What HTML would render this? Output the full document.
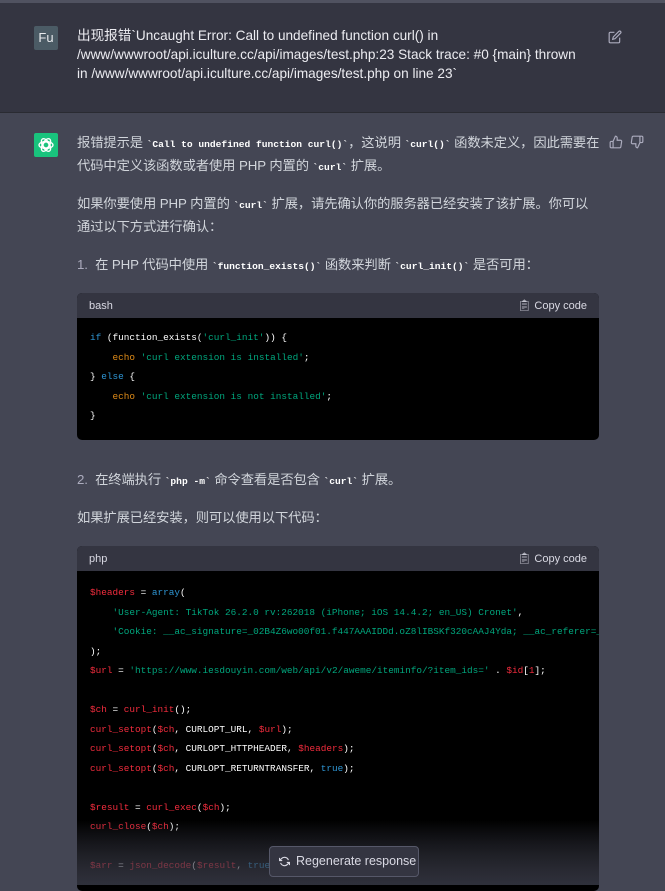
<!DOCTYPE html>
<html><head><meta charset="utf-8"><style>
*{margin:0;padding:0;box-sizing:border-box}
body{width:665px;height:885px;overflow:hidden;background:#444654;font-family:"Liberation Sans","Noto Sans CJK SC",sans-serif;color:#d1d5db;font-size:13px;position:relative}
.user{position:absolute;left:0;top:0;width:665px;height:113px;background:#343541;border-top:3px solid #505260;border-bottom:1px solid #2a2b32}
.av{position:absolute;left:34px;width:24px;height:24px;border-radius:2px}
.t{position:absolute;left:77px;width:505px}
.ut{line-height:19px;color:#ececf1;font-size:13.6px}
p{position:absolute;left:77px;width:530px;line-height:22.5px;font-size:13.3px;letter-spacing:-0.1px}
p span,p code{line-height:1}
code.i{font-family:"Liberation Mono",monospace;font-weight:bold;font-size:9.6px;color:#fff;letter-spacing:0}
.cb{position:absolute;left:77px;width:522px;border-radius:5px;overflow:hidden;background:#000}
.hd{height:25px;background:#343541;font-size:11px;color:#d9d9e3;display:flex;align-items:center;justify-content:space-between;padding:0 12px}
pre{font-family:"Liberation Mono",monospace;font-size:9.4px;line-height:19.5px;padding:11px 13px;color:#fff;white-space:pre;overflow:hidden}
.k{color:#2e95d3}.s{color:#00a67d}.e{color:#f22c3d}.o{color:#df8b18}
</style></head><body>
<div class="user">
<div class="av" style="top:23px;background:#4b5b65;color:#e8eaed;font-size:13px;text-align:center;line-height:24px">Fu</div>
<div class="t ut" style="top:23px">出现报错`Uncaught Error: Call to undefined function curl() in /www/wwwroot/api.iculture.cc/api/images/test.php:23 Stack trace: #0 {main} thrown in /www/wwwroot/api.iculture.cc/api/images/test.php on line 23`</div>
<svg style="position:absolute;left:608px;top:27px" width="14" height="14" viewBox="0 0 24 24" fill="none" stroke="#acacbe" stroke-width="2"><path d="M11 4H4a2 2 0 0 0-2 2v14a2 2 0 0 0 2 2h14a2 2 0 0 0 2-2v-7"/><path d="M18.5 2.5a2.1 2.1 0 0 1 3 3L12 15l-4 1 1-4 9.5-9.5z"/></svg>
</div>
<div class="av" style="top:133px;background:#19c37d;"><svg width="24" height="24" viewBox="0 0 24 24" fill="none" stroke="#fff" stroke-width="1.3"><circle cx="12" cy="12" r="3"/><ellipse cx="12" cy="12" rx="7" ry="3.5"/><ellipse cx="12" cy="12" rx="7" ry="3.5" transform="rotate(60 12 12)"/><ellipse cx="12" cy="12" rx="7" ry="3.5" transform="rotate(120 12 12)"/></svg></div>
<svg style="position:absolute;left:609px;top:135px" width="14" height="14" viewBox="0 0 24 24" fill="none" stroke="#acacbe" stroke-width="2"><path d="M14 9V5a3 3 0 0 0-3-3l-4 9v11h11.3a2 2 0 0 0 2-1.7l1.4-9a2 2 0 0 0-2-2.3zM7 22H4a2 2 0 0 1-2-2v-7a2 2 0 0 1 2-2h3"/></svg>
<svg style="position:absolute;left:630px;top:135px" width="14" height="14" viewBox="0 0 24 24" fill="none" stroke="#acacbe" stroke-width="2"><path d="M10 15v4a3 3 0 0 0 3 3l4-9V2H5.7a2 2 0 0 0-2 1.7l-1.4 9a2 2 0 0 0 2 2.3zM17 2h3a2 2 0 0 1 2 2v7a2 2 0 0 1-2 2h-3"/></svg>
<p style="top:132px">报错提示是 <code class="i">`Call to undefined function curl()`</code>，这说明 <code class="i">`curl()`</code> 函数未定义，因此需要在代码中定义该函数或者使用 PHP 内置的 <code class="i">`curl`</code> 扩展。</p>
<p style="top:193px;width:522px">如果你要使用 PHP 内置的 <code class="i">`curl`</code> 扩展，请先确认你的服务器已经安装了该扩展。你可以通过以下方式进行确认：</p>
<p style="top:254px"><span style="color:#acacbe">1.</span>&nbsp; 在 PHP 代码中使用 <code class="i">`function_exists()`</code> 函数来判断 <code class="i">`curl_init()`</code> 是否可用：</p>
<div class="cb" style="top:293px;height:147px">
<div class="hd"><span>bash</span><span>&#128203;&#xFE0E; Copy code</span></div>
<pre style="padding-top:10px"><span class="k">if</span> (function_exists(<span class="s">'curl_init'</span>)) {
    <span class="o">echo</span> <span class="s">'curl extension is installed'</span>;
} <span class="k">else</span> {
    <span class="o">echo</span> <span class="s">'curl extension is not installed'</span>;
}</pre></div>
<p style="top:469px"><span style="color:#acacbe">2.</span>&nbsp; 在终端执行 <code class="i">`php -m`</code> 命令查看是否包含 <code class="i">`curl`</code> 扩展。</p>
<p style="top:507px">如果扩展已经安装，则可以使用以下代码：</p>
<div class="cb" style="top:546px;height:345px">
<div class="hd"><span>php</span><span>&#128203;&#xFE0E; Copy code</span></div>
<pre style="padding-top:12px"><span class="e">$headers</span> = <span class="k">array</span>(
    <span class="s">'User-Agent: TikTok 26.2.0 rv:262018 (iPhone; iOS 14.4.2; en_US) Cronet'</span>,
    <span class="s">'Cookie: __ac_signature=_02B4Z6wo00f01.f447AAAIDDd.oZ8lIBSKf320cAAJ4Yda; __ac_referer=__ac_blank'</span>
);
<span class="e">$url</span> = <span class="s">'https://www.iesdouyin.com/web/api/v2/aweme/iteminfo/?item_ids='</span> . <span class="e">$id</span>[<span class="e">1</span>];

<span class="e">$ch</span> = <span class="e">curl_init</span>();
<span class="e">curl_setopt</span>(<span class="e">$ch</span>, CURLOPT_URL, <span class="e">$url</span>);
<span class="e">curl_setopt</span>(<span class="e">$ch</span>, CURLOPT_HTTPHEADER, <span class="e">$headers</span>);
<span class="e">curl_setopt</span>(<span class="e">$ch</span>, CURLOPT_RETURNTRANSFER, <span class="k">true</span>);

<span class="e">$result</span> = <span class="e">curl_exec</span>(<span class="e">$ch</span>);
<span class="e">curl_close</span>(<span class="e">$ch</span>);

<span class="e">$arr</span> = <span class="e">json_decode</span>(<span class="e">$result</span>, <span class="k">true</span>);</pre></div>
<div style="position:absolute;left:0;top:820px;width:665px;height:65px;background:linear-gradient(rgba(68,70,84,0),rgba(68,70,84,.6))"></div>
<div style="position:absolute;left:77px;top:820px;width:522px;height:65px;background:linear-gradient(rgba(0,0,0,0),rgba(52,53,65,.55))"></div>
<div style="position:absolute;left:269px;top:846px;width:150px;height:31px;background:#343541;border:1px solid #565869;border-radius:4px;font-size:12.5px;color:#d9d9e3;line-height:29px;padding-left:26px">Regenerate response
<svg style="position:absolute;left:9px;top:9px" width="11" height="11" viewBox="0 0 24 24" fill="none" stroke="#d9d9e3" stroke-width="2.5"><path d="M1 4v6h6M23 20v-6h-6"/><path d="M20.5 9A9 9 0 0 0 5.6 5.6L1 10m22 4-4.6 4.4A9 9 0 0 1 3.5 15"/></svg></div>
</body></html>
